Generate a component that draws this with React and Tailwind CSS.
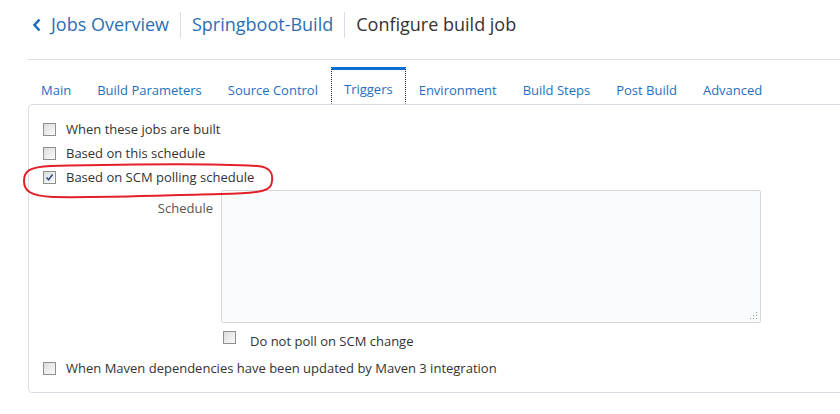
import React from 'react';

const tabs = ['Main', 'Build Parameters', 'Source Control', 'Triggers', 'Environment', 'Build Steps', 'Post Build', 'Advanced'];

const Checkbox = ({ checked = false }) => (
  <span className="relative inline-block w-[13px] h-[13px] shrink-0 border border-[#8e8f8f] bg-gradient-to-br from-[#dcdcdc] to-[#fbfbfb]">
    {checked && (
      <svg className="absolute left-[1px] top-[1px]" width="9" height="9" viewBox="0 0 9 9">
        <path d="M1.5 4.5 L3.6 6.8 L7.6 1.4" fill="none" stroke="#3d4f86" strokeWidth="1.6" />
      </svg>
    )}
  </span>
);

const CheckRow = ({ label, checked }) => (
  <div className="h-[24px] flex items-center gap-[10px]">
    <Checkbox checked={checked} />
    <span className="text-[13px] text-[#333] leading-[18px]">{label}</span>
  </div>
);

export default function App() {
  return (
    <div className="relative w-[840px] h-[414px] overflow-hidden bg-white" style={{ fontFamily: '"Open Sans", "Noto Sans", sans-serif' }}>
      <div className="pl-[28px]">
        {/* breadcrumb header */}
        <div className="h-[60px] pb-[10px] pl-[4px] flex items-center border-b border-[#d9dee4] text-[18px]">
          <svg width="10" height="14" viewBox="0 0 10 14" className="mr-[9px]">
            <path d="M7.5 1.5 L2.5 7 L7.5 12.5" fill="none" stroke="#1f6fbf" strokeWidth="2.6" />
          </svg>
          <span className="text-[#2a6fb4]">Jobs Overview</span>
          <span className="mx-[11px] w-px h-[26px] bg-[#d9dee4]" />
          <span className="text-[#2a6fb4]">Springboot-Build</span>
          <span className="mx-[11px] w-px h-[26px] bg-[#d9dee4]" />
          <span className="text-[#333]">Configure build job</span>
        </div>

        {/* tab strip */}
        <div className="relative z-10 flex mt-[7px] text-[13px]">
          {tabs.map((t) =>
            t === 'Triggers' ? (
              <div key={t} className="h-[37px] -mb-px px-[12px] flex items-end pb-[5px] bg-white border-t-[3px] border-t-[#0a6ecf] [border-top-style:solid] border-x border-x-[#222] [border-left-style:dotted] [border-right-style:dotted] border-b border-b-white">
                <span className="text-[#1f6fbf] leading-[18px]">{t}</span>
              </div>
            ) : (
              <div key={t} className="h-[37px] px-[13px] flex items-end pb-[5px]">
                <span className="text-[#1f6fbf] leading-[18px]">{t}</span>
              </div>
            )
          )}
        </div>

        {/* panel */}
        <div className="w-[830px] border border-[#d9dee4] rounded-[4px] pl-[14px] pt-[12px] pb-[12px]">
          <CheckRow label="When these jobs are built" />
          <CheckRow label="Based on this schedule" />
          <CheckRow label="Based on SCM polling schedule" checked />

          <div className="flex gap-[8px] mt-px">
            <div className="w-[170px] text-right pt-[9px] text-[13px] text-[#555] leading-[18px]">Schedule</div>
            <div className="relative w-[540px] h-[133px] border border-[#d6d8da] rounded-[2px] bg-[#fafbfd]">
              <svg className="absolute right-[2px] bottom-[2px]" width="9" height="9" viewBox="0 0 9 9">
                <rect x="7" y="1" width="1" height="1" fill="#999" />
                <rect x="4" y="4" width="1" height="1" fill="#999" />
                <rect x="7" y="4" width="1" height="1" fill="#999" />
                <rect x="1" y="7" width="1" height="1" fill="#999" />
                <rect x="4" y="7" width="1" height="1" fill="#999" />
                <rect x="7" y="7" width="1" height="1" fill="#999" />
              </svg>
            </div>
          </div>

          <div className="flex items-start gap-[14px] ml-[180px] mt-[8px]">
            <Checkbox />
            <span className="mt-[1px] text-[13px] text-[#333] leading-[18px]">Do not poll on SCM change</span>
          </div>

          <div className="mt-[6px]">
            <CheckRow label="When Maven dependencies have been updated by Maven 3 integration" />
          </div>
        </div>
      </div>

      {/* red annotation ring */}
      <svg className="absolute left-[21px] top-[162px]" width="256" height="40" viewBox="0 0 256 40">
        <path d="M30 4 C120 2 200 2 236 4 C250 5 252 12 251 19 C250 28 246 31 200 32 C150 33 80 36 32 35 C8 34 3 28 3 19 C3 9 8 5 30 4 Z" fill="none" stroke="#e3202a" strokeWidth="2" />
      </svg>
    </div>
  );
}
